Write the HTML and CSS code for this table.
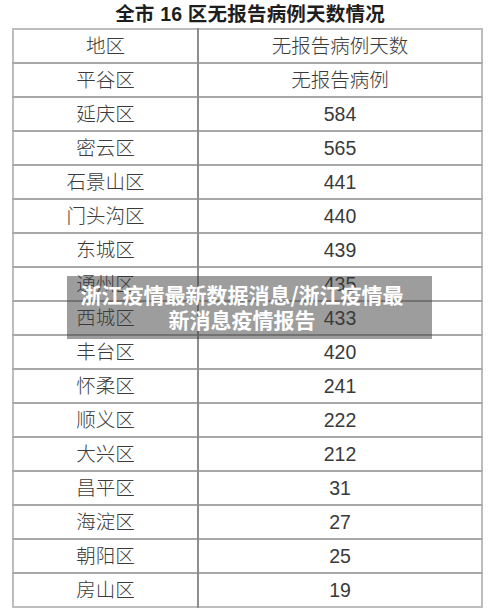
FILE: index.html
```html
<!DOCTYPE html>
<html lang="zh-CN">
<head>
<meta charset="utf-8">
<title>全市 16 区无报告病例天数情况</title>
<link rel="stylesheet" href="styles.css">
</head>
<body>
<div class="page">
  <h1 class="title">全市 16 区无报告病例天数情况</h1>
  <table class="data">
    <colgroup><col class="c1"><col class="c2"></colgroup>
    <tbody>
      <tr><td>地区</td><td>无报告病例天数</td></tr>
      <tr><td>平谷区</td><td>无报告病例</td></tr>
      <tr><td>延庆区</td><td>584</td></tr>
      <tr><td>密云区</td><td>565</td></tr>
      <tr><td>石景山区</td><td>441</td></tr>
      <tr><td>门头沟区</td><td>440</td></tr>
      <tr><td>东城区</td><td>439</td></tr>
      <tr><td>通州区</td><td>435</td></tr>
      <tr><td>西城区</td><td>433</td></tr>
      <tr><td>丰台区</td><td>420</td></tr>
      <tr><td>怀柔区</td><td>241</td></tr>
      <tr><td>顺义区</td><td>222</td></tr>
      <tr><td>大兴区</td><td>212</td></tr>
      <tr><td>昌平区</td><td>31</td></tr>
      <tr><td>海淀区</td><td>27</td></tr>
      <tr><td>朝阳区</td><td>25</td></tr>
      <tr><td>房山区</td><td>19</td></tr>
    </tbody>
  </table>
  <div class="caption">浙江疫情最新数据消息/浙江疫情最新消息疫情报告</div>
</div>
</body>
</html>
```
FILE: styles.css
```css
html, body {
  margin: 0;
  padding: 0;
  background: #ffffff;
}
.page {
  position: relative;
  width: 500px;
  height: 615px;
  overflow: hidden;
  font-family: "Liberation Sans", "Noto Sans CJK SC", sans-serif;
}
.title {
  margin: 0;
  height: 28px;
  line-height: 28px;
  font-size: 19.5px;
  font-weight: bold;
  color: #1e1e1e;
  text-align: center;
  letter-spacing: 0.2px;
}
.data {
  margin-left: 12px;
  width: 471px;
  border-collapse: collapse;
  table-layout: fixed;
  border: 2px solid #bdbdbd;
}
.c1 { width: 185px; }
.data td {
  height: 32px;
  padding: 0;
  text-align: center;
  vertical-align: middle;
  font-size: 19.5px;
  font-weight: 300;
  color: #3a3a3a;
  border-top: 2px solid #a8a8a8;
  line-height: 32px;
}
.data tr:first-child td { border-top: none; }
.data td:first-child {
  border-right: 2px solid #8e8e8e;
}
.caption {
  position: absolute;
  left: 67px;
  top: 276px;
  width: 330px;
  padding: 6px 25px 7px 10px;
  background: rgba(60, 60, 60, 0.5);
  color: #ffffff;
  font-family: "Noto Sans CJK SC", sans-serif;
  font-weight: bold;
  font-size: 21px;
  line-height: 25px;
  text-align: center;
}
```
